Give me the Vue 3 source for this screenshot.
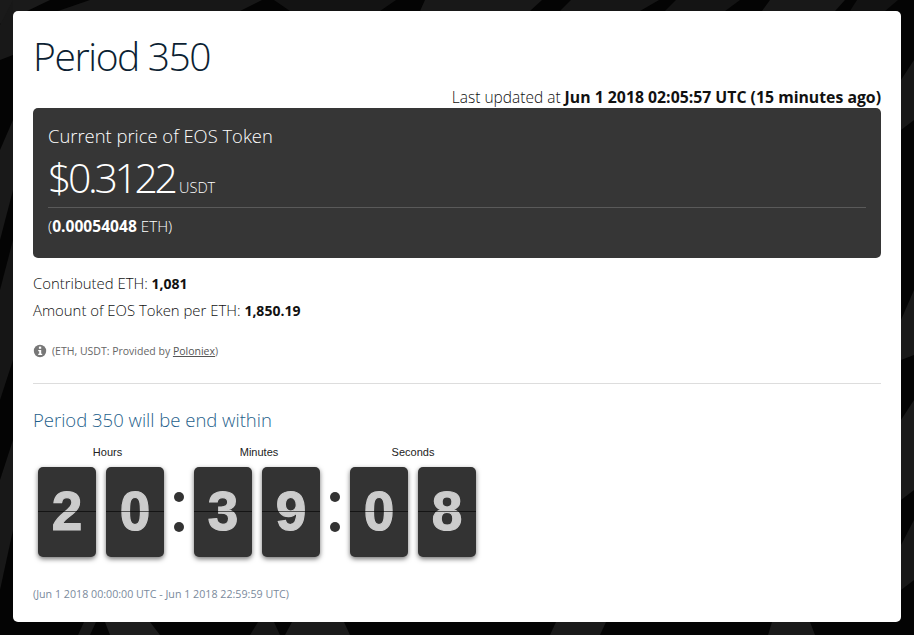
<template>
  <div class="page">
    <svg class="page__bg" width="914" height="635" viewBox="0 0 914 635" aria-hidden="true">
      <polygon v-for="(shard, i) in shards" :key="i" :points="shard.points" :fill="shard.fill" />
    </svg>

    <main class="card">
      <h1 class="card__title">Period 350</h1>
      <p class="card__updated">
        Last updated at <b>Jun 1 2018 02:05:57 UTC (15 minutes ago)</b>
      </p>

      <section class="price">
        <h2 class="price__label">Current price of EOS Token</h2>
        <div class="price__value"><span class="price__num">$0.3122</span> <small>USDT</small></div>
        <hr class="price__rule" />
        <div class="price__eth">(<b>0.00054048</b> ETH)</div>
      </section>

      <p class="stat">Contributed ETH: <b>1,081</b></p>
      <p class="stat">Amount of EOS Token per ETH: <b>1,850.19</b></p>

      <p class="note">
        <svg class="note__icon" width="14" height="14" viewBox="0 0 14 14" aria-hidden="true">
          <circle cx="7" cy="7" r="6.2" fill="#777" />
          <rect x="5.9" y="2.6" width="2.3" height="2.2" fill="#fff" />
          <path d="M5.2 6h3v3.8h1v1.2H5.2V9.8h1V7.2h-1z" fill="#fff" />
        </svg>
        <span>(ETH, USDT: Provided by <a class="note__link">Poloniex</a>)</span>
      </p>

      <hr class="card__rule" />

      <h3 class="countdown__title">Period 350 will be end within</h3>

      <div class="clock">
        <template v-for="(group, g) in groups" :key="group.label">
          <span v-if="g > 0" class="clock__colon"><i></i><i></i></span>
          <div class="clock__group">
            <span class="clock__label" :class="`clock__label--${group.label.toLowerCase()}`">{{ group.label }}</span>
            <div class="clock__digits">
              <div v-for="(digit, d) in group.digits" :key="d" class="flip">{{ digit }}</div>
            </div>
          </div>
        </template>
      </div>

      <p class="range">(Jun 1 2018 00:00:00 UTC - Jun 1 2018 22:59:59 UTC)</p>
    </main>
  </div>
</template>

<script setup>
const groups = [
  { label: "Hours", digits: ["2", "0"] },
  { label: "Minutes", digits: ["3", "9"] },
  { label: "Seconds", digits: ["0", "8"] },
];

// only the strips round the card show, so the shards just need to cross them
const shards = [
  { points: "0,0 50,0 0,24", fill: "#1a1a1a" },
  { points: "58,11 90,0 262,0 240,11", fill: "#171717" },
  { points: "274,0 396,0 380,11 290,11", fill: "#131313" },
  { points: "425,0 542,0 530,11 420,11", fill: "#181818" },
  { points: "571,0 659,0 640,11 560,11", fill: "#161616" },
  { points: "676,0 740,0 725,11 665,11", fill: "#141414" },
  { points: "770,0 845,0 835,11 762,11", fill: "#181818" },
  { points: "857,0 898,0 885,11 850,11", fill: "#121212" },
  { points: "0,60 13,55 13,0 0,25", fill: "#181818" },
  { points: "0,240 13,190 13,120 0,150", fill: "#191919" },
  { points: "0,400 13,360 13,240 0,290", fill: "#161616" },
  { points: "0,590 13,530 13,440 0,480", fill: "#181818" },
  { points: "901,130 914,120 914,60 901,80", fill: "#181818" },
  { points: "901,360 914,355 914,290 901,320", fill: "#1a1a1a" },
  { points: "901,500 914,490 914,400 901,420", fill: "#1b1b1b" },
  { points: "901,590 914,580 914,520 901,545", fill: "#181818" },
  { points: "84,622 96,622 90,635 78,635", fill: "#181818" },
  { points: "105,622 150,622 160,635 110,635", fill: "#1d1d1d" },
  { points: "258,622 274,622 280,635 250,635", fill: "#161616" },
  { points: "292,622 344,622 350,635 285,635", fill: "#1b1b1b" },
  { points: "556,622 606,622 600,635 550,635", fill: "#1a1a1a" },
  { points: "772,622 810,622 815,635 768,635", fill: "#1a1a1a" },
];
</script>

<style scoped>
.page {
  position: relative;
  width: 914px;
  height: 635px;
  overflow: hidden;
  background: #040404;
  padding: 11px 13px 13px;
  box-sizing: border-box;
  color: #111;
  font-family: "Open Sans", "Noto Sans", sans-serif;
}

.page__bg {
  position: absolute;
  inset: 0;
}

.card {
  position: relative;
  box-sizing: border-box;
  height: 611px;
  padding: 20px;
  border-radius: 5px;
  background: #fff;
}

.card__title {
  margin: 0;
  height: 52px;
  font-size: 39px;
  line-height: 50px;
  font-weight: 300;
  letter-spacing: -1.4px;
  color: #0c1f33;
}

.card__updated {
  margin: 4px 0 0;
  height: 21px;
  text-align: right;
  font-size: 15.5px;
  line-height: 21px;
  font-weight: 300;
}

.card__updated b {
  font-size: 15.8px;
  font-weight: 700;
}

.price {
  box-sizing: border-box;
  height: 150px;
  margin-bottom: 12px;
  padding: 15px;
  border-radius: 5px;
  background: #363636;
  color: #fff;
}

.price__label {
  margin: 0;
  font-size: 18.4px;
  line-height: 26px;
  font-weight: 300;
}

.price__value {
  margin-top: 3px;
  font-size: 41px;
  line-height: 50px;
  font-weight: 300;
}

.price__num {
  letter-spacing: -3.4px;
}

.price__value small {
  margin-left: -6px;
  font-size: 14.5px;
  font-weight: 300;
}

.price__rule {
  margin: -6px 0 8px;
  border: 0;
  border-top: 1px solid #5a5a5a;
}

.price__eth {
  font-size: 15.2px;
  line-height: 21px;
  font-weight: 300;
}

.price__eth b {
  font-size: 15.6px;
  font-weight: 700;
}

.stat {
  margin: 0;
  font-size: 14.9px;
  line-height: 27px;
  font-weight: 300;
}

.stat b {
  font-size: 14px;
  font-weight: 700;
}

.note {
  display: flex;
  align-items: center;
  gap: 5px;
  margin: 17px 0 0;
  font-size: 10.5px;
  line-height: 20px;
  color: #666;
}

.note__link {
  color: #555;
  text-decoration: underline;
}

.card__rule {
  margin: 22px 0 0;
  border: 0;
  border-top: 1px solid #ddd;
}

.countdown__title {
  margin: 22px 0 0;
  font-size: 18.5px;
  line-height: 28px;
  font-weight: 300;
  color: #1f5f8b;
}

.clock {
  display: flex;
  margin: 9px 0 0 5px;
}

.clock__group {
  display: flex;
  flex-direction: column;
  width: 126px;
}

.clock__label {
  height: 21px;
  margin-bottom: 3px;
  text-align: center;
  font-family: "Liberation Sans", Arial, sans-serif;
  font-size: 11px;
  line-height: 19px;
  color: #222;
}

.clock__label--hours {
  padding-left: 13px;
}

.clock__label--minutes {
  padding-left: 4px;
}

.clock__digits {
  display: flex;
  gap: 10px;
}

.flip {
  position: relative;
  width: 58px;
  height: 90px;
  border-radius: 5px;
  background: #333;
  box-shadow: 0 2px 5px rgba(0, 0, 0, 0.55);
  text-align: center;
  font-family: "Liberation Sans", Arial, sans-serif;
  font-size: 55px;
  font-weight: 700;
  line-height: 88px;
  color: #ccc;
  -webkit-text-stroke: 1.2px #ccc;
}

.flip::after {
  content: "";
  position: absolute;
  left: 0;
  right: 0;
  top: 44px;
  height: 1px;
  background: rgba(0, 0, 0, 0.6);
}

.clock__colon {
  display: flex;
  flex-direction: column;
  align-items: center;
  gap: 20px;
  width: 30px;
  padding-top: 49px;
  box-sizing: border-box;
}

.clock__colon i {
  width: 10px;
  height: 10px;
  border-radius: 50%;
  background: #333;
}

.range {
  margin: 28px 0 0;
  font-size: 10.7px;
  line-height: 18px;
  font-weight: 400;
  color: #7a8a9c;
}
</style>
